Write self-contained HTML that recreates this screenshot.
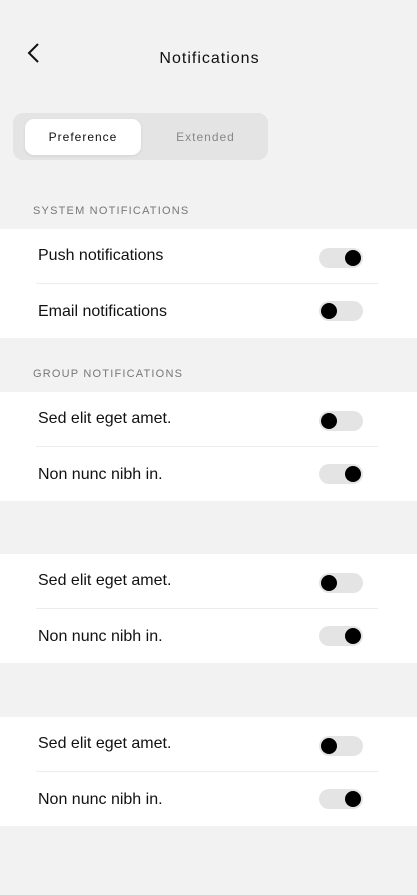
<!DOCTYPE html><html><head><style>
body{margin:0;width:417px;height:895px;background:#f2f2f2;font-family:"Liberation Sans",sans-serif;position:relative;overflow:hidden;color:#111}
.abs{position:absolute}
.title{left:0;width:417px;top:50px;text-align:center;font-size:16px;letter-spacing:1px;padding-left:1px}
.seg{left:13px;top:113px;width:255px;height:47px;background:#e4e4e4;border-radius:10px}
.tab{top:6px;height:36px;line-height:37px;text-align:center;font-size:12px;letter-spacing:1px}
.hdr{left:33px;font-size:11px;letter-spacing:1.2px;color:#777}
.blk{left:0;width:417px;height:109px;background:#fff}
.row{position:absolute;left:38px;font-size:16px;height:20px;line-height:20px}
.div{position:absolute;left:36px;width:342px;top:54px;height:1px;background:#ececec}
.tg{position:absolute;left:319px;width:44px;height:20px;border-radius:10px;background:#e4e4e4}
.tg i{position:absolute;top:2px;width:16px;height:16px;border-radius:50%;background:#000}
.on i{left:26px}.off i{left:2px}
</style></head><body>
<svg class="abs" style="left:25px;top:42px" width="16" height="22"><path d="M13 2 L4 11 L13 20" stroke="#111" stroke-width="2" fill="none"/></svg>
<div class="abs title">Notifications</div>
<div class="abs seg">
<div class="abs tab" style="left:12px;width:116px;background:#fff;border-radius:9px;box-shadow:0 1px 3px rgba(0,0,0,.08)">Preference</div>
<div class="abs tab" style="left:130px;width:125px;color:#888">Extended</div>
</div>
<div class="abs hdr" style="top:205px">SYSTEM NOTIFICATIONS</div>
<div class="abs blk" style="top:229px">
<div class="row" style="top:17px">Push notifications</div><div class="tg on" style="top:19px"><i></i></div>
<div class="div"></div>
<div class="row" style="top:73px">Email notifications</div><div class="tg off" style="top:72px"><i></i></div>
</div>
<div class="abs hdr" style="top:368px">GROUP NOTIFICATIONS</div>
<div class="abs blk" style="top:392px">
<div class="row" style="top:17px">Sed elit eget amet.</div><div class="tg off" style="top:19px"><i></i></div>
<div class="div"></div>
<div class="row" style="top:73px">Non nunc nibh in.</div><div class="tg on" style="top:72px"><i></i></div>
</div>
<div class="abs blk" style="top:554px">
<div class="row" style="top:17px">Sed elit eget amet.</div><div class="tg off" style="top:19px"><i></i></div>
<div class="div"></div>
<div class="row" style="top:73px">Non nunc nibh in.</div><div class="tg on" style="top:72px"><i></i></div>
</div>
<div class="abs blk" style="top:717px">
<div class="row" style="top:17px">Sed elit eget amet.</div><div class="tg off" style="top:19px"><i></i></div>
<div class="div"></div>
<div class="row" style="top:73px">Non nunc nibh in.</div><div class="tg on" style="top:72px"><i></i></div>
</div>
</body></html>
